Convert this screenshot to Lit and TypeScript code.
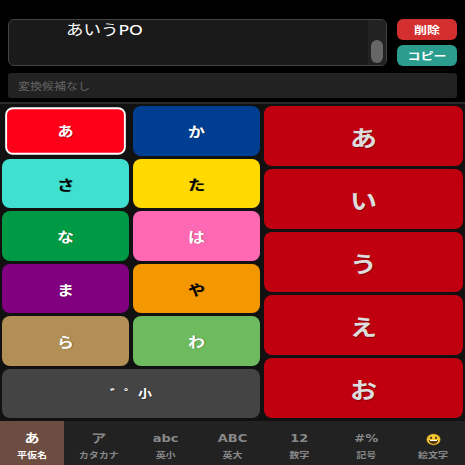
import { LitElement, html, css, svg } from "lit";
import { customElement } from "lit/decorators.js";

const keys = [
  ["あ", "#ff0019", "w sel"], ["か", "#003e92", "w"],
  ["さ", "#40e0d0", "b"], ["た", "#ffd900", "b"],
  ["な", "#009944", "w"], ["は", "#ff69b4", "w"],
  ["ま", "#800080", "w"], ["や", "#f39800", "b"],
  ["ら", "#b18f55", "w"], ["わ", "#6dbb5e", "w"],
];
const vowels = ["あ", "い", "う", "え", "お"];
const tabs = [
  ["あ", "平仮名"], ["ア", "カタカナ"], ["abc", "英小"], ["ABC", "英大"],
  ["12", "数字"], ["#%", "記号"], ["", "絵文字"],
];

@customElement("app-root")
export class AppRoot extends LitElement {
  static styles = css`
    :host {
      display: flex;
      flex-direction: column;
      width: 465px;
      height: 465px;
      overflow: hidden;
      background: #000;
      font-family: "DejaVu Sans", "Noto Sans CJK JP", sans-serif;
    }
    .t { display: inline-block; transform: scaleY(0.82); }
    .top {
      display: flex;
      flex-direction: column;
      gap: 7px;
      padding: 19px 8px 4px;
      box-sizing: border-box;
      flex: none;
      border-bottom: 2px solid #2a2a2a;
      height: 104px;
    }
    .row { display: flex; gap: 10px; }
    .input {
      flex: 1;
      height: 47px;
      box-sizing: border-box;
      background: #1a1a1a;
      border: 1px solid #444;
      border-radius: 6px;
      color: #fff;
      font-size: 17.5px;
      line-height: 18px;
      padding: 1px 0 0 57px;
      position: relative;
      overflow: hidden;
    }
    .track {
      position: absolute;
      top: 0;
      bottom: 0;
      right: 0;
      width: 18px;
      background: #222;
    }
    .thumb {
      position: absolute;
      right: 3px;
      top: 20px;
      width: 12px;
      height: 23px;
      border-radius: 6px;
      background: #666;
    }
    .actions { width: 60px; display: flex; flex-direction: column; gap: 5px; }
    .act {
      flex: 1;
      border-radius: 6px;
      color: #fff;
      font-size: 13px;
      font-weight: 700;
      display: flex;
      align-items: center;
      justify-content: center;
    }
    .del { background: #d32f2f; }
    .copy { background: #2a9d8f; }
    .cands {
      height: 25px;
      border-radius: 3px;
      background: #222;
      color: #666;
      font-size: 12px;
      display: flex;
      align-items: center;
      padding-left: 10px;
    }
    .board {
      flex: 1;
      min-height: 0;
      background: #111;
      display: grid;
      grid-template-columns: 258px 199px;
      column-gap: 4px;
      padding: 2px 2px 3px;
    }
    .left {
      display: grid;
      grid-template-columns: 1fr 1fr;
      grid-template-rows: repeat(6, 1fr);
      column-gap: 4px;
      row-gap: 3px;
    }
    .right {
      display: grid;
      grid-template-rows: repeat(5, 1fr);
      row-gap: 3px;
    }
    .key {
      border-radius: 8px;
      display: flex;
      align-items: center;
      justify-content: center;
      font-size: 17px;
      font-weight: 700;
      box-sizing: border-box;
      text-shadow: 1px 1px 1px rgba(0, 0, 0, 0.3);
    }
    .w { color: #fff; }
    .b { color: #000; }
    .sel { border: 2px solid #fff; transform: scale(0.95); }
    .mod { grid-column: span 2; background: #444; color: #fff; font-size: 14px; }
    .vowel {
      background: #c1000f;
      color: #ddd;
      font-size: 27px;
    }
    .tabs {
      height: 44px;
      flex: none;
      background: #222;
      display: grid;
      grid-template-columns: repeat(7, 1fr);
      column-gap: 3px;
    }
    .tab {
      display: flex;
      flex-direction: column;
      align-items: center;
      color: #888;
      font-weight: 700;
      padding-top: 10px;
      box-sizing: border-box;
    }
    .tab.on { background: #6d4c41; color: #fff; }
    .big { font-size: 13px; line-height: 16px; height: 16px; display: flex; align-items: center; }
    .big.kana { font-size: 15px; }
    .small { font-size: 10px; line-height: 12px; margin-top: 3px; white-space: nowrap; }
    svg { display: block; }
  `;

  private emoji() {
    return svg`<svg width="15" height="15" viewBox="0 0 15 15">
      <circle cx="7.5" cy="7.5" r="7" fill="#f4c534" stroke="#5a4510" stroke-width="0.6"></circle>
      <ellipse cx="5" cy="5.5" rx="1" ry="1.5" fill="#3b2d0a"></ellipse>
      <ellipse cx="10" cy="5.5" rx="1" ry="1.5" fill="#3b2d0a"></ellipse>
      <path d="M3 8.2h9c0 3-2 4.8-4.5 4.8S3 11.2 3 8.2z" fill="#5a3a10"></path>
      <path d="M4 8.2h7v1.2H4z" fill="#fff"></path>
    </svg>`;
  }

  render() {
    return html`
      <div class="top">
        <div class="row">
          <div class="input"><span class="t">あいうPO</span><div class="track"><div class="thumb"></div></div></div>
          <div class="actions">
            <div class="act del"><span class="t">削除</span></div>
            <div class="act copy"><span class="t">コピー</span></div>
          </div>
        </div>
        <div class="cands"><span class="t">変換候補なし</span></div>
      </div>
      <div class="board">
        <div class="left">
          ${keys.map(([k, c, cls]) => html`<div class="key ${cls}" style="background:${c}"><span class="t">${k}</span></div>`)}
          <div class="key mod"><span class="t">゛゜小</span></div>
        </div>
        <div class="right">
          ${vowels.map((v) => html`<div class="key vowel"><span class="t">${v}</span></div>`)}
        </div>
      </div>
      <div class="tabs">
        ${tabs.map(([b, s], i) => html`<div class="tab ${i === 0 ? "on" : ""}">
          <div class="big ${i < 2 ? "kana" : ""}"><span class="t">${i === 6 ? this.emoji() : b}</span></div>
          <div class="small"><span class="t">${s}</span></div>
        </div>`)}
      </div>
    `;
  }
}
